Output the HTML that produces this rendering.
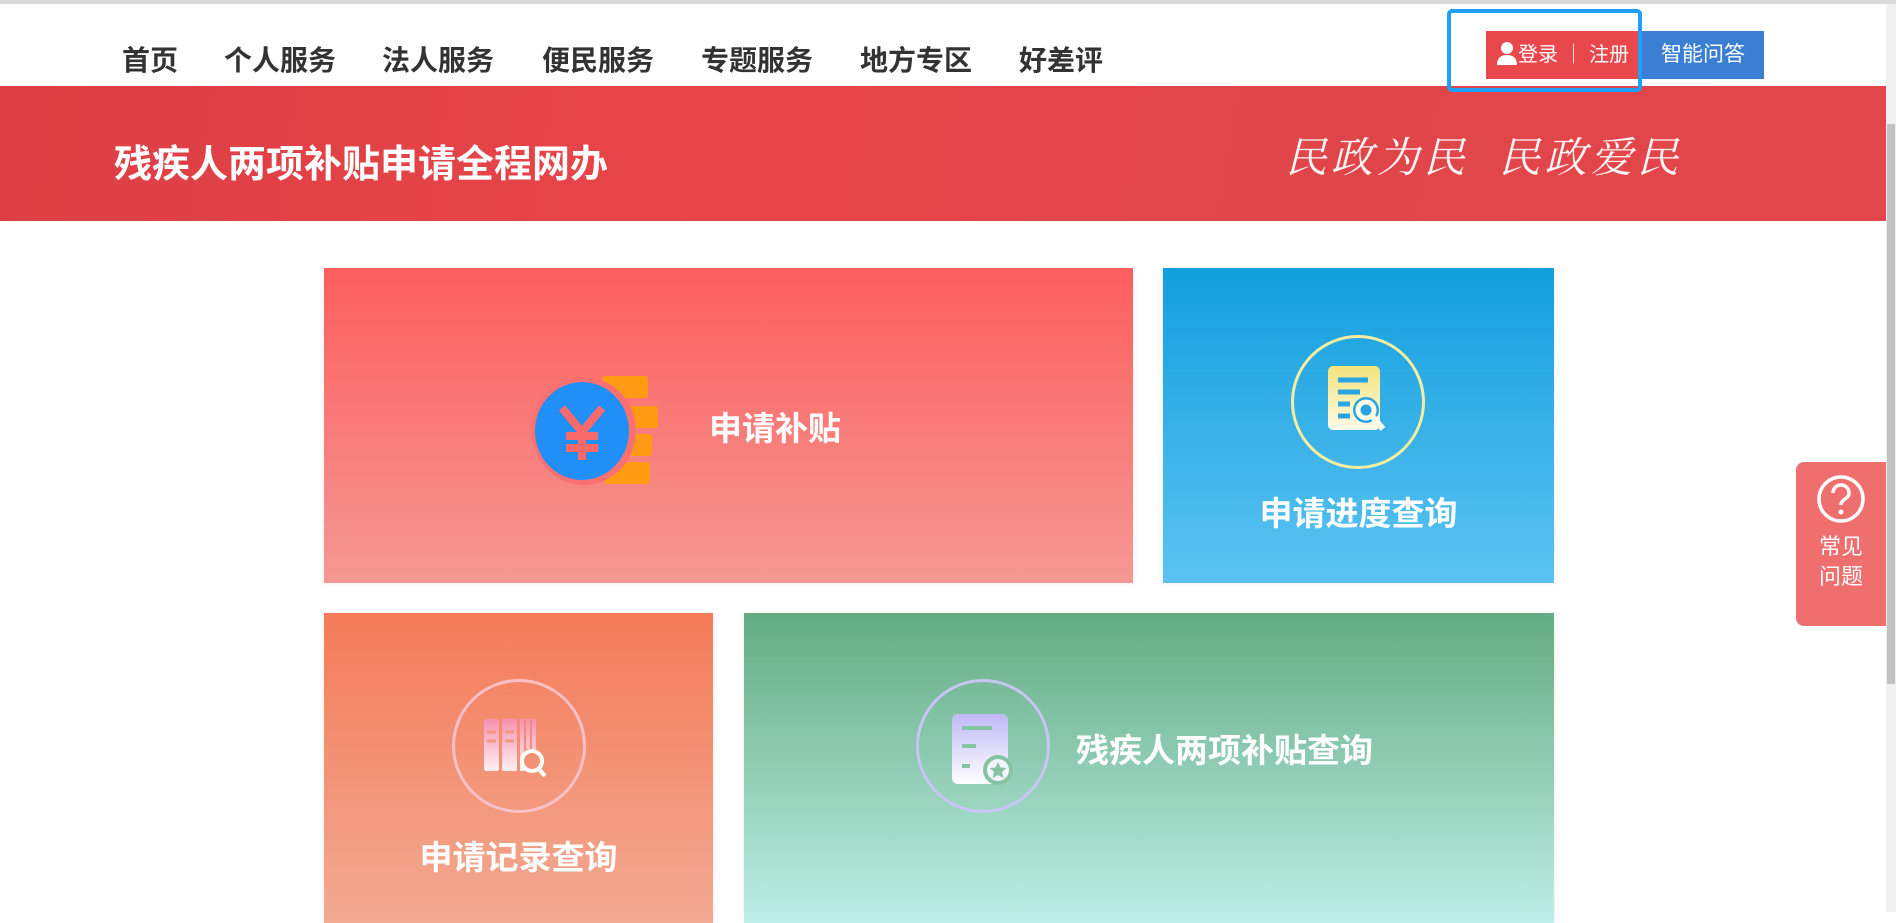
<!DOCTYPE html>
<html><head><meta charset="utf-8"><style>
*{margin:0;padding:0;box-sizing:border-box}
body{width:1896px;height:912px;overflow:hidden;background:#fff;font-family:"Liberation Sans","Noto Sans CJK SC",sans-serif;position:relative}
.topline{position:absolute;left:0;top:0;width:1896px;height:4px;background:#d9d9d9}
.nav{position:absolute;top:44px;font-size:28px;font-weight:bold;color:#333;line-height:34px}
.banner{position:absolute;left:0;top:86px;width:1886px;height:135px;background:linear-gradient(100deg,#dd3f44 0%,#e84549 40%,#e0454a 70%,#e4474b 100%)}
.banner .t{position:absolute;left:114px;top:55px;font-size:38px;font-weight:bold;color:#fff;line-height:48px}
.banner .s{position:absolute;left:1285px;top:46px;font-size:42px;color:#fff;font-style:italic;font-family:"Noto Serif CJK SC",serif;letter-spacing:4px;line-height:46px;opacity:.95}
.scroll{position:absolute;left:1886px;top:4px;width:10px;height:908px;background:#f0f0f0}
.scroll i{position:absolute;left:1px;top:120px;width:8px;height:560px;background:#c1c1c1}
.login{position:absolute;left:1486px;top:31px;width:156px;height:48px;background:#e8474b;color:#fff;font-size:20px;line-height:48px;padding-left:10px}
.ai{position:absolute;left:1642px;top:31px;width:122px;height:48px;background:#3a7fd4;color:#fff;font-size:21px;line-height:48px;text-align:center}
.box{position:absolute;left:1447px;top:9px;width:195px;height:83px;border:4px solid #1ea0f8;border-radius:5px;z-index:5}
.card{position:absolute;color:#fff;font-weight:bold;box-shadow:0 0 6px rgba(0,0,0,.08)}
.lbl{position:absolute;font-size:33px;line-height:40px;white-space:nowrap}
.circ{position:absolute;width:134px;height:134px;border-radius:50%;border:3px solid rgba(255,255,255,.85)}
.side{position:absolute;left:1796px;top:462px;width:90px;height:164px;background:#ef6e6e;border-radius:8px 0 0 8px;color:#fff;text-align:center;font-size:22px;line-height:30px}
</style></head><body>
<div class="topline"></div>
<div class="nav" style="left:122px">首页</div>
<div class="nav" style="left:224px">个人服务</div>
<div class="nav" style="left:382px">法人服务</div>
<div class="nav" style="left:542px">便民服务</div>
<div class="nav" style="left:701px">专题服务</div>
<div class="nav" style="left:860px">地方专区</div>
<div class="nav" style="left:1019px">好差评</div>
<div class="login"><svg width="22" height="24" viewBox="0 0 22 24" style="vertical-align:-4px"><circle cx="11" cy="7" r="6" fill="#fff"/><path d="M1 24c0-8 5-10 10-10s10 2 10 10z" fill="#fff"/></svg>登录 ｜ 注册</div>
<div class="ai">智能问答</div>
<div class="banner"><div class="t">残疾人两项补贴申请全程网办</div><div class="s">民政为民&nbsp;&nbsp;民政爱民</div></div>
<div class="box"></div>
<div class="scroll"><i></i></div>

<div class="card" style="left:324px;top:268px;width:809px;height:315px;background:linear-gradient(#fc5e5e,#f59893)">
 <svg style="position:absolute;left:208px;top:108px" width="142" height="110" viewBox="0 0 142 110">
  <rect x="70" y="0" width="46" height="22" rx="3" fill="#ff9a12"/>
  <rect x="80" y="30" width="46" height="22" rx="3" fill="#ff9a12"/>
  <rect x="80" y="58" width="40" height="22" rx="3" fill="#ff9a12"/>
  <rect x="72" y="86" width="46" height="22" rx="3" fill="#ff9a12"/>
  <ellipse cx="52" cy="55" rx="52" ry="54" fill="#fa7070"/>
  <ellipse cx="50" cy="55" rx="47" ry="49" fill="#2090f8"/>
  <path d="M30 32l20 24 20-24M50 56v28M34 60h32M34 72h32" stroke="#fa6a6a" stroke-width="8" fill="none"/>
 </svg>
 <div class="lbl" style="left:385px;top:141px">申请补贴</div>
</div>

<div class="card" style="left:1163px;top:268px;width:391px;height:315px;background:linear-gradient(#139fdd,#5bc3f2)">
 <div class="circ" style="left:128px;top:67px;border-color:#f3eda0"></div>
 <svg style="position:absolute;left:165px;top:98px" width="62" height="70" viewBox="0 0 62 70"><defs><linearGradient id="g1" x1="0" y1="0" x2="0" y2="1"><stop offset="0" stop-color="#f4e37a"/><stop offset="1" stop-color="#fffbe8"/></linearGradient></defs><rect x="0" y="0" width="52" height="64" rx="5" fill="url(#g1)"/><path d="M10 14h30M10 26h22M10 38h12M10 50h12" stroke="#2aa4e2" stroke-width="5"/><circle cx="38" cy="44" r="13" fill="#2aa4e2"/><circle cx="38" cy="44" r="8" fill="none" stroke="#fffbe8" stroke-width="5"/><path d="M45 51l10 12" stroke="#fffbe8" stroke-width="6"/></svg>
 <div class="lbl" style="left:0;width:391px;text-align:center;top:226px">申请进度查询</div>
</div>

<div class="card" style="left:324px;top:613px;width:389px;height:310px;background:linear-gradient(#f47b59,#f2aa92)">
 <div class="circ" style="left:128px;top:66px;border-color:#f9c0c8"></div>
 <svg style="position:absolute;left:160px;top:106px" width="66" height="60" viewBox="0 0 66 60"><defs><linearGradient id="g2" x1="0" y1="0" x2="0" y2="1"><stop offset="0" stop-color="#f890b0"/><stop offset="1" stop-color="#fff0f2"/></linearGradient></defs><rect x="0" y="0" width="15" height="52" rx="2" fill="url(#g2)"/><rect x="18" y="0" width="15" height="52" rx="2" fill="url(#g2)"/><path d="M38 0v52M44 0v30M50 0v30" stroke="url(#g2)" stroke-width="4"/><path d="M3 13h9M3 22h9M21 13h9M21 22h9" stroke="#f29a80" stroke-width="3"/><circle cx="48" cy="42" r="10" fill="none" stroke="#fff" stroke-width="4"/><path d="M54 49l7 8" stroke="#fff" stroke-width="4"/></svg>
 <div class="lbl" style="left:0;width:389px;text-align:center;top:225px">申请记录查询</div>
</div>

<div class="card" style="left:744px;top:613px;width:810px;height:310px;background:linear-gradient(#63ac82,#bdeee6)">
 <div class="circ" style="left:172px;top:66px;border-color:#c8c4f4"></div>
 <svg style="position:absolute;left:208px;top:101px" width="66" height="72" viewBox="0 0 66 72"><defs><linearGradient id="g3" x1="0" y1="0" x2="0" y2="1"><stop offset="0" stop-color="#c0b8f8"/><stop offset="1" stop-color="#ffffff"/></linearGradient></defs><rect x="0" y="0" width="56" height="70" rx="6" fill="url(#g3)"/><path d="M10 14h30M10 32h14M10 52h8" stroke="#86c3a2" stroke-width="4"/><circle cx="46" cy="56" r="15" fill="#86c3a2"/><circle cx="46" cy="56" r="11" fill="#f4f4ff"/><path d="M46 48l2.5 5.5 6 .5-4.5 4 1.5 6-5.5-3-5.5 3 1.5-6-4.5-4 6-.5z" fill="#86c3a2"/></svg>
 <div class="lbl" style="left:332px;top:118px">残疾人两项补贴查询</div>
</div>

<div class="side">
 <svg style="margin-top:12px" width="50" height="50" viewBox="0 0 50 50"><circle cx="25" cy="25" r="22" fill="none" stroke="#fff" stroke-width="3.5"/><path d="M17 19c0-5 4-8 8-8s8 3 8 8c0 6-8 6-8 12" fill="none" stroke="#fff" stroke-width="3.5"/><circle cx="25" cy="38" r="2.5" fill="#fff"/></svg>
 <div>常见</div><div>问题</div>
</div>
</body></html>
